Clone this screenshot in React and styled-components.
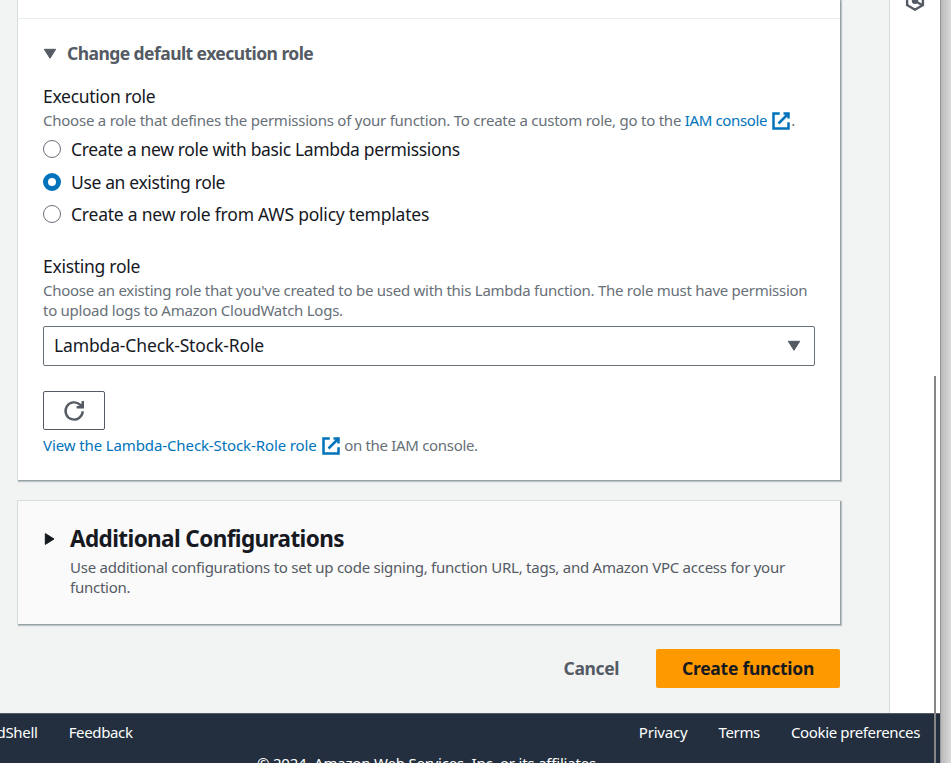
import React from 'react';
import styled, { createGlobalStyle } from 'styled-components';

const GlobalStyle = createGlobalStyle`
  *, *::before, *::after { box-sizing: border-box; }
  html, body { margin: 0; padding: 0; overflow: hidden; }
  body { font-family: "Noto Sans", "Open Sans", sans-serif; color: #16191f; }
  button { font-family: inherit; cursor: pointer; }
  h2, h3, p { margin: 0; }
`;

const Desktop = styled.div`
  display: flex;
  width: 951px;
  height: 763px;
  overflow: hidden;
  background: linear-gradient(to right, #979797 0, #979797 941px, #b9b9b9 941px, #dadada 951px);
`;

const Window = styled.div`
  position: relative;
  display: flex;
  flex-direction: column;
  width: 940px;
  height: 763px;
  overflow: hidden;
  background: #f2f3f3;
`;

const Scrollbar = styled.div`
  position: absolute;
  top: 376px;
  right: 4px;
  bottom: 0;
  width: 2px;
  background: #868686;
`;

const Body = styled.div`
  display: flex;
  height: 713px;
`;

const Main = styled.main`
  flex: 1;
  padding: 0 49px 0 18px;
`;

const SidePanel = styled.aside`
  display: flex;
  justify-content: center;
  width: 51px;
  background: #fff;
  border-left: 1px solid #d5dbdb;
`;

const Card = styled.section`
  box-shadow: 1px 1px 0 0 #95a3a6, 1px 1px 1px 1px rgba(0, 28, 36, 0.22), 0 0 0 1px #dfe4e4;
`;

const FormCard = styled(Card)`
  height: 480px;
  background: #fff;
`;

const PreviousSection = styled.div`
  height: 19px;
  border-bottom: 1px solid #eaeded;
`;

const FormBody = styled.div`
  padding: 22px 25px 0 25px;
`;

const Heading = styled.h3`
  display: flex;
  align-items: center;
  gap: 10px;
  font-size: 17.5px;
  font-weight: 700;
  line-height: 24px;
  letter-spacing: -0.56px;
  color: #545b64;

  svg { margin-top: 1px; }
`;

const Label = styled.div`
  margin-top: ${(p) => p.$top}px;
  font-size: 17.5px;
  line-height: 24px;
  letter-spacing: -0.28px;
`;

const Hint = styled.p`
  margin-top: ${(p) => p.$top || 2}px;
  font-size: 15px;
  line-height: 20px;
  white-space: nowrap;
  letter-spacing: ${(p) => p.$track || -0.24}px;
  color: ${(p) => p.$color || '#687078'};
`;

const Link = styled.a`
  color: #0073bb;
  letter-spacing: ${(p) => p.$track}px;

  svg {
    margin: -5px 0 -5px 4px;
    vertical-align: 0;
  }
`;

const RadioGroup = styled.div`
  display: grid;
  row-gap: 8.5px;
  margin-top: 7px;
`;

const RadioOption = styled.label`
  display: flex;
  align-items: center;
  gap: 10px;
  font-size: 17.5px;
  line-height: 24px;
  letter-spacing: ${(p) => p.$track}px;
`;

const RadioDot = styled.span`
  width: 18px;
  height: 18px;
  border-radius: 50%;
  background: #fff;
  border: ${(p) => (p.$checked ? '5.5px solid #0073bb' : '1px solid #687078')};
`;

const Select = styled.div`
  display: flex;
  align-items: center;
  justify-content: space-between;
  height: 40px;
  margin-top: 6px;
  padding: 0 13px 2px 10px;
  border: 1px solid #687078;
  border-radius: 2px;
  font-size: 17.5px;
  letter-spacing: -0.14px;

  svg { margin-top: 2px; }
`;

const RefreshButton = styled.button`
  display: flex;
  align-items: center;
  justify-content: center;
  width: 62px;
  height: 39px;
  margin-top: 25px;
  padding: 0;
  border: 1px solid #545b64;
  border-radius: 2px;
  background: #fff;
`;

const ExpandCard = styled(Card)`
  display: flex;
  gap: 15px;
  height: 123px;
  margin-top: 21px;
  padding: 24px 25px 0 25px;
  background: #fafafa;

  > svg { margin-top: 7px; flex: none; }
`;

const CardTitle = styled.h2`
  font-size: 22.5px;
  font-weight: 700;
  line-height: 28px;
  letter-spacing: -0.6px;
`;

const Actions = styled.div`
  display: flex;
  justify-content: flex-end;
  gap: 37px;
  margin-top: 25px;
`;

const ActionButton = styled.button`
  height: 39px;
  width: ${(p) => (p.$primary ? '184px' : 'auto')};
  padding: 0 0 2px;
  border: 0;
  border-radius: 2px;
  background: ${(p) => (p.$primary ? '#ff9900' : 'transparent')};
  color: ${(p) => (p.$primary ? '#16191f' : '#545b64')};
  font-size: 17.5px;
  font-weight: 700;
  letter-spacing: ${(p) => (p.$primary ? -0.26 : -0.4)}px;
`;

const Footer = styled.footer`
  height: 50px;
  padding-top: 8px;
  border-top: 1px solid #545b64;
  background: #232f3e;
  color: #fff;
  font-size: 15px;
  line-height: 20px;
  white-space: nowrap;
`;

const FooterRow = styled.div`
  display: flex;
  justify-content: space-between;
  padding-right: 20px;
`;

const FooterGroup = styled.nav`
  display: flex;
  gap: 31px;
  margin-left: ${(p) => p.$shift || 0}px;
`;

const FooterLink = styled.a`
  letter-spacing: ${(p) => p.$track}px;
`;

const Copyright = styled.div`
  margin: 11px 0 0 257px;
  letter-spacing: -0.2px;
`;

const CaretDown = ({ color = '#545b64' }) => (
  <svg width="14" height="12" viewBox="0 0 14 12">
    <path d="M1.3 1.3h11.4L7 10.3z" fill={color} stroke={color} strokeWidth="1" strokeLinejoin="round" />
  </svg>
);

const CaretRight = () => (
  <svg width="12" height="14" viewBox="0 0 12 14">
    <path d="M2.3 1.6v10.8L11 7z" fill="#16191f" stroke="#16191f" strokeWidth="1" strokeLinejoin="round" />
  </svg>
);

const ExternalIcon = () => (
  <svg width="20" height="20" viewBox="0 0 16 16" fill="none" stroke="#0073bb" strokeWidth="2">
    <path d="M10 2h4v4" />
    <path d="m6 10 8-8" />
    <path d="M14 9.05V14H2V2h5" />
  </svg>
);

const RefreshIcon = () => (
  <svg width="22" height="22" viewBox="0 0 22 22" fill="none" stroke="#545b64" strokeWidth="2.4">
    <path d="M13.6 7.3h6.2V1" />
    <path d="M19.7 11.3a8.6 8.6 0 1 1-2.5-6.4l2.2 2.2" />
    <path d="M16.6 4.6l2.4-1.2v3.4z" fill="#545b64" stroke="none" />
  </svg>
);

const HexagonIcon = () => (
  <svg width="20" height="22" viewBox="0 0 20 22" fill="none" stroke="#545b64" strokeWidth="2.4">
    <path d="M10 1.3l7.9 4.6v9.2L10 19.7l-7.9-4.6V5.9z" />
    <circle cx="10" cy="10.8" r="3.2" fill="#545b64" stroke="none" />
    <path d="M10 11l7.5 4.3" />
  </svg>
);

const HexagonButton = styled.span`
  height: 12px;
  display: flex;
  align-items: flex-end;

  svg { flex: none; }
`;

const ROLE_OPTIONS = [
  { text: 'Create a new role with basic Lambda permissions', track: -0.35 },
  { text: 'Use an existing role', track: -0.36, checked: true },
  { text: 'Create a new role from AWS policy templates', track: -0.22 },
];

const LEGAL_LINKS = [
  { text: 'Privacy', track: -0.2 },
  { text: 'Terms', track: -0.33 },
  { text: 'Cookie preferences', track: -0.36 },
];

export default function App() {
  return (
    <>
      <GlobalStyle />
      <Desktop>
        <Window>
          <Body>
            <Main>
              <FormCard>
                <PreviousSection />
                <FormBody>
                  <Heading><CaretDown />Change default execution role</Heading>
                  <Label $top={19}>Execution role</Label>
                  <Hint $track={-0.235}>
                    Choose a role that defines the permissions of your function. To create a custom role, go to the{' '}
                    <Link $track={-0.36}>IAM console<ExternalIcon /></Link>.
                  </Hint>
                  <RadioGroup>
                    {ROLE_OPTIONS.map((o) => (
                      <RadioOption key={o.text} $track={o.track}>
                        <RadioDot $checked={o.checked} />{o.text}
                      </RadioOption>
                    ))}
                  </RadioGroup>
                  <Label $top={28}>Existing role</Label>
                  <Hint $track={-0.26}>
                    Choose an existing role that you've created to be used with this Lambda function. The role must have permission
                    <br />
                    to upload logs to Amazon CloudWatch Logs.
                  </Hint>
                  <Select>Lambda-Check-Stock-Role<CaretDown /></Select>
                  <RefreshButton aria-label="Refresh"><RefreshIcon /></RefreshButton>
                  <Hint $top={5} $track={-0.32}>
                    <Link $track={-0.11}>View the Lambda-Check-Stock-Role role<ExternalIcon /></Link> on the IAM console.
                  </Hint>
                </FormBody>
              </FormCard>
              <ExpandCard>
                <CaretRight />
                <div>
                  <CardTitle>Additional Configurations</CardTitle>
                  <Hint $top={4} $track={-0.25} $color="#545b64">
                    Use additional configurations to set up code signing, function URL, tags, and Amazon VPC access for your
                    <br />
                    function.
                  </Hint>
                </div>
              </ExpandCard>
              <Actions>
                <ActionButton>Cancel</ActionButton>
                <ActionButton $primary>Create function</ActionButton>
              </Actions>
            </Main>
            <SidePanel>
              <HexagonButton><HexagonIcon /></HexagonButton>
            </SidePanel>
          </Body>
          <Footer>
            <FooterRow>
              <FooterGroup $shift={-34}>
                <FooterLink $track={-0.3}>CloudShell</FooterLink>
                <FooterLink $track={-0.35}>Feedback</FooterLink>
              </FooterGroup>
              <FooterGroup>
                {LEGAL_LINKS.map((l) => (
                  <FooterLink key={l.text} $track={l.track}>{l.text}</FooterLink>
                ))}
              </FooterGroup>
            </FooterRow>
            <Copyright>© 2024, Amazon Web Services, Inc. or its affiliates.</Copyright>
          </Footer>
          <Scrollbar />
        </Window>
      </Desktop>
    </>
  );
}
